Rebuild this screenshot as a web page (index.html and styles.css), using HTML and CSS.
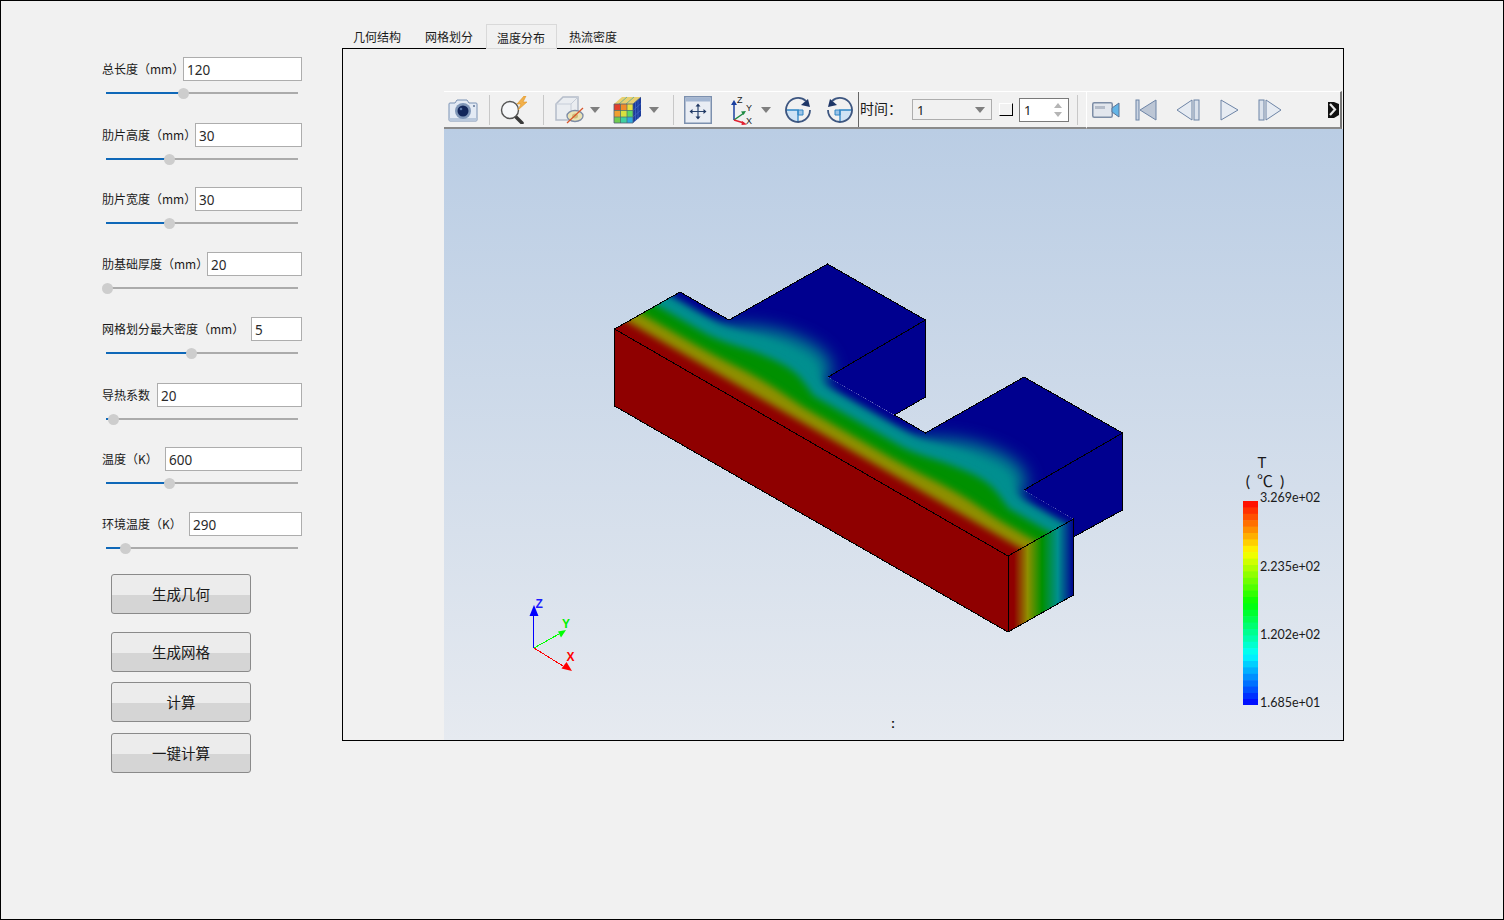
FILE: index.html
```html
<!DOCTYPE html>
<html lang="zh-CN">
<head>
<meta charset="utf-8">
<title>肋片温度分布</title>
<link rel="stylesheet" href="styles.css">
</head>
<body>
<div class="app">
  <aside class="side">
    <div class="fields">
      <div class="field"><div class="row"><span class="label">总长度（mm）</span><div class="input w119">120</div></div><div class="slider"><div class="fill" style="width:77px"><i class="thumb"></i></div></div></div>
      <div class="field"><div class="row"><span class="label">肋片高度（mm）</span><div class="input w107">30</div></div><div class="slider"><div class="fill" style="width:63px"><i class="thumb"></i></div></div></div>
      <div class="field"><div class="row"><span class="label">肋片宽度（mm）</span><div class="input w107">30</div></div><div class="slider"><div class="fill" style="width:63px"><i class="thumb"></i></div></div></div>
      <div class="field"><div class="row"><span class="label">肋基础厚度（mm）</span><div class="input w95">20</div></div><div class="slider"><div class="fill" style="width:1px"><i class="thumb"></i></div></div></div>
      <div class="field"><div class="row"><span class="label">网格划分最大密度（mm）</span><div class="input w51">5</div></div><div class="slider"><div class="fill" style="width:85px"><i class="thumb"></i></div></div></div>
      <div class="field"><div class="row"><span class="label">导热系数</span><div class="input w145">20</div></div><div class="slider"><div class="fill" style="width:7px"><i class="thumb"></i></div></div></div>
      <div class="field"><div class="row"><span class="label">温度（K）</span><div class="input w137">600</div></div><div class="slider"><div class="fill" style="width:63px"><i class="thumb"></i></div></div></div>
      <div class="field"><div class="row"><span class="label">环境温度（K）</span><div class="input w113">290</div></div><div class="slider"><div class="fill" style="width:19px"><i class="thumb"></i></div></div></div>
    </div>
    <div class="buttons">
      <button class="btn gap18">生成几何</button>
      <button class="btn gap10">生成网格</button>
      <button class="btn gap11">计算</button>
      <button class="btn">一键计算</button>
    </div>
  </aside>

  <main class="main">
    <nav class="tabs">
      <div class="tab">几何结构</div>
      <div class="tab">网格划分</div>
      <div class="tab active">温度分布</div>
      <div class="tab">热流密度</div>
    </nav>
    <section class="pane">
      <div class="viewer">
        <div class="toolbars">
          <div class="tb tb-main">
            <svg width="30" height="24" viewBox="0 0 30 24"><path d="M2 5h5l2-3h10l2 3h7a1 1 0 0 1 1 1v16a1 1 0 0 1-1 1H2a1 1 0 0 1-1-1V6a1 1 0 0 1 1-1z" fill="#e3eaf4" stroke="#7b92b4"/><path d="M1.500 20h27v3h-27z" fill="#b9c8dc"/><circle cx="15" cy="13" r="8" fill="#8097b8"/><circle cx="15" cy="13" r="5.500" fill="#12265a"/><circle cx="13" cy="11" r="1.300" fill="#5c78a8"/><circle cx="26" cy="8" r="1" fill="#5f7596"/></svg>
            <i class="sep"></i>
            <svg width="30" height="28" viewBox="0 0 30 28"><path d="M16 20l7 7" stroke="#3a3a3a" stroke-width="3.500" stroke-linecap="round"/><circle cx="11" cy="14" r="8.500" fill="#f6f7f9" stroke="#555" stroke-width="1.400"/><path d="M25 0l-7 8h4l-3 6 9-8h-4l3-6z" fill="#f2b04a" stroke="#de9526" stroke-width=".6"/></svg>
            <i class="sep"></i>
            <svg width="29" height="28" viewBox="0 0 29 28"><path d="M1 8l7-7h15v16l-7 7H1z" fill="#eaedf1" stroke="#b4bcc9" stroke-width="1.500"/><path d="M1 8h15v16M16 8l7-7" fill="none" stroke="#c6cdd8"/><ellipse cx="20" cy="20" rx="8" ry="5.500" fill="#ebe3b4" stroke="#7d8ca6" stroke-width="1.300"/><ellipse cx="20" cy="20" rx="3" ry="2.500" fill="#cfbe78"/><path d="M12 27L28 12" stroke="#d9552a" stroke-width="1.200"/></svg>
            <svg class="caret" width="10" height="6" viewBox="0 0 10 6"><path d="M0 0h10L5 6z" fill="#7f7f7f"/></svg>
            <svg width="29" height="28" viewBox="0 0 29 28"><path d="M1 8L9 1h19L20 8z" fill="#e8d070"/><path d="M6 8l8-7M13 8l8-7" stroke="#5a9" stroke-width=".8"/><path d="M1 8h19v19H1z" fill="#39c46a"/><path d="M1 8h6.500v6.500H1z" fill="#e2402a"/><path d="M7.500 8H14v6.500H7.500z" fill="#f08c2a"/><path d="M14 8h6v6.500h-6z" fill="#e8e040"/><path d="M1 14.500h6.500V21H1z" fill="#f0a030"/><path d="M7.500 14.500H14V21H7.500z" fill="#d8e040"/><path d="M14 14.500h6V21h-6z" fill="#60d860"/><path d="M1 21h6.500v6H1z" fill="#70cc50"/><path d="M7.500 21H14v6H7.500z" fill="#40d0a0"/><path d="M14 21h6v6h-6z" fill="#30a8e0"/><path d="M20 8l8-7v19l-8 7z" fill="#1c3c9c"/><path d="M22.500 6v19M25 4v19M20 14.500l8-7M20 21l8-7" stroke="#4468c8" stroke-width=".7"/><path d="M7.500 8v19M14 8v19M1 14.500h19M1 21h19" stroke="#4a6a70" stroke-width=".7"/><path d="M1 8h19v19H1zM20 8l8-7" fill="none" stroke="#506078" stroke-width=".8"/></svg>
            <svg class="caret" width="10" height="6" viewBox="0 0 10 6"><path d="M0 0h10L5 6z" fill="#7f7f7f"/></svg>
            <i class="sep"></i>
            <svg width="28" height="28" viewBox="0 0 28 28"><rect x=".75" y=".75" width="26.500" height="26.500" fill="#e9edf4" stroke="#7c90ae" stroke-width="1.500"/><rect x="1.500" y="1.500" width="25" height="4" fill="#a3b6d2"/><path d="M14 9v13M8 15.500h12" stroke="#2b4570" stroke-width="1.200"/><path d="M14 7.500l-2.500 3h5zM14 23.500l-2.500-3h5zM5.500 15.500l3-2.500v5zM22.500 15.500l-3-2.500v5z" fill="#1f3763"/></svg>
            <svg class="axes" width="24" height="30" viewBox="0 0 24 30"><path d="M3 25V8" stroke="#1a3fa0" stroke-width="1.500"/><path d="M3 5l-3 5h6z" fill="#1a3fa0"/><path d="M3 25l10-7" stroke="#1e8a40" stroke-width="1.500"/><path d="M15 16l-5 .5 2.500 3.500z" fill="#1e8a40"/><path d="M3 25l10 3" stroke="#e02030" stroke-width="1.500"/><path d="M16 29.500l-5-3.500-.5 4z" fill="#e02030"/><text x="6" y="8" class="ax-t">Z</text><text x="15" y="16" class="ax-t">Y</text><text x="15" y="29" class="ax-t">X</text></svg>
            <svg class="caret" width="10" height="6" viewBox="0 0 10 6"><path d="M0 0h10L5 6z" fill="#7f7f7f"/></svg>
            <svg width="28" height="28" viewBox="0 0 28 28"><path d="M14 14H2a12 12 0 0 0 12 12z" fill="#cfe3f5"/><path d="M14 14h5v5h-5z" fill="#9cc4e8" stroke="#2f86c6"/><path d="M2 14h12v12" fill="none" stroke="#2f86c6" stroke-width="1.300"/><path d="M22 5A12 12 0 1 0 26 14" fill="none" stroke="#3d5680" stroke-width="1.800"/><path d="M26 11l-9-2 7-6z" fill="#1d3566"/></svg>
            <svg width="28" height="28" viewBox="0 0 28 28"><path d="M14 14h12a12 12 0 0 1-12 12z" fill="#cfe3f5"/><path d="M9 14h5v5H9z" fill="#9cc4e8" stroke="#2f86c6"/><path d="M26 14H14v12" fill="none" stroke="#2f86c6" stroke-width="1.300"/><path d="M6 5A12 12 0 1 1 2 14" fill="none" stroke="#3d5680" stroke-width="1.800"/><path d="M2 11l9-2-7-6z" fill="#1d3566"/></svg>
            <i class="sep dark"></i>
            <span class="time-label">时间：</span>
            <div class="combo"><span>1</span><svg width="10" height="6" viewBox="0 0 10 6"><path d="M0 0h10L5 6z" fill="#7f7f7f"/></svg></div>
            <i class="check"></i>
            <div class="spin"><span>1</span><svg width="8" height="14" viewBox="0 0 8 14"><path d="M0 5l4-5 4 5zM0 9l4 5 4-5z" fill="#b5b5b5"/></svg></div>
            <i class="sep"></i>
          </div>
          <div class="tb tb-play">
            <svg width="28" height="16" viewBox="0 0 28 16"><rect x=".75" y=".75" width="19.500" height="14.500" rx="1.500" fill="#e2e6ed" stroke="#7d8da6" stroke-width="1.500"/><rect x="3" y="4" width="10" height="3" fill="#b4bcc9"/><path d="M20 6l7-5v14l-7-5z" fill="#63b4e6" stroke="#5d7596"/></svg>
            <svg width="22" height="22" viewBox="0 0 22 22"><rect x="1" y="1" width="3" height="20" fill="#cbd5e3" stroke="#6d84a6"/><path d="M21 1v20L5 11z" fill="#bcc6d5" stroke="#6d84a6"/></svg>
            <svg width="24" height="22" viewBox="0 0 24 22"><path d="M16 1v20L1 11z" fill="#e6ebf2" stroke="#6d84a6"/><rect x="18" y="1" width="5" height="20" fill="#dbe2ec" stroke="#6d84a6"/></svg>
            <svg width="19" height="22" viewBox="0 0 19 22"><path d="M1 1v20l17-10z" fill="#e6ebf2" stroke="#6d84a6"/></svg>
            <svg width="24" height="22" viewBox="0 0 24 22"><rect x="1" y="1" width="5" height="20" fill="#dbe2ec" stroke="#6d84a6"/><path d="M8 1v20l15-10z" fill="#e6ebf2" stroke="#6d84a6"/></svg>
            <i></i>
            <svg class="more" width="11" height="17" viewBox="0 0 11 17"><path d="M0 1h6l5 2v11l-5 3H0z" fill="#111"/><path d="M2 3l5 5.500-5 5.500" fill="none" stroke="#e8e8e8" stroke-width="2.200"/></svg>
          </div>
        </div>
        <div class="canvas">
          <svg class="scene" viewBox="444 129 899 611" width="899" height="611">
            <defs>
              <clipPath id="topface"><path d="M614.500 329L680 292L729 320L827.500 264L925.500 320L828 377L925.500 433L1024 377L1122.500 433L1024 490L1073.500 519L1008 556Z"/></clipPath>
              <filter id="soft" filterUnits="userSpaceOnUse" x="500" y="200" width="760" height="500"><feGaussianBlur stdDeviation="3.800"/></filter>
              <filter id="wide" filterUnits="userSpaceOnUse" x="500" y="200" width="760" height="500"><feGaussianBlur stdDeviation="9"/></filter>
              <linearGradient id="endface" gradientUnits="userSpaceOnUse" x1="1008" y1="0" x2="1073.500" y2="0">
                <stop offset=".09" stop-color="#8f0000"/><stop offset=".3" stop-color="#8f8f00"/><stop offset=".52" stop-color="#009000"/><stop offset=".76" stop-color="#008f8f"/><stop offset="1" stop-color="#00008f"/>
              </linearGradient>
              <linearGradient id="sky" x1="0" y1="0" x2="0" y2="1"><stop offset="0" stop-color="#bacde4"/><stop offset="1" stop-color="#e6eaf0"/></linearGradient>
            </defs>
            <rect x="444" y="129" width="899" height="611" fill="url(#sky)"/>

            <path class="crisp" fill="#00008f" d="M925.500 320L828 377L894.500 415L925.500 397ZM1122.500 433L1024 490L1073.500 519V537L1122.500 510Z"/>
            <g clip-path="url(#topface)">
              <path class="crisp" fill="#00008f" d="M600 250H1140V570H600Z"/>
              <g filter="url(#wide)"><path transform="matrix(3.935 2.27 .655 -.37 614.500 329)" fill="#008f8f" d="M10 60C14 96 18 124 25 130C31 136 35 124 37 108C38 96 39 84 40 60ZM59.500 60C63.500 96 67.500 124 74.500 130C80.500 136 84.500 124 86.500 108C87.500 96 88.500 84 89.500 60Z"/></g>
              <g filter="url(#soft)"><path transform="matrix(3.935 2.27 .655 -.37 614.500 329)" fill="#008f8f" d="M-10 -30V88H12C16 90 20 104 26 106C32 108 35 100 37 92C38 90 39 88 40 88H61.500C65.500 90 69.500 104 75.500 106C81.500 108 84.500 100 86.500 92C87.500 90 88.500 88 89.500 88H110V-30Z"/></g>
              <g filter="url(#soft)"><path transform="matrix(3.935 2.27 .655 -.37 614.500 329)" fill="#009000" d="M-10 -30V64H13C18 66 22 80 28 82C33 84 35 76 40 64H62.500C67.500 66 71.500 80 77.500 82C82.500 84 84.500 76 89.500 64H110V-30Z"/></g>
              <g filter="url(#soft)"><path transform="matrix(3.935 2.27 .655 -.37 614.500 329)" fill="#8f8f00" d="M-10 -30V41H14C20 41 24 45 30 45C34 45 36 43 42 41H63.500C69.500 41 73.500 45 79.500 45C83.500 45 85.500 43 91.500 41H110V-30Z"/></g>
              <g filter="url(#soft)"><path transform="matrix(3.935 2.27 .655 -.37 614.500 329)" fill="#8f0000" d="M-10 -30V20H110V-30Z"/></g>
            </g>
            <path class="crisp" fill="#8f0000" d="M614.500 329L1008 556V632L614.500 406Z"/>
            <path class="crisp" fill="url(#endface)" d="M1008 556L1073.500 519V595L1008 632Z"/>
            <path class="edge" d="M614.500 329L680 292L729 320L827.500 264L925.500 320V397L894.500 415L925.500 433L1024 377L1122.500 433V510L1073.500 537V595L1008 632L614.500 406ZM614.500 329L1008 556L1073.500 519V537M1008 556V632M828 377L925.500 320M1024 490L1122.500 433"/>

            <g class="triad">
              <path d="M533.500 648V612" stroke="#0000ff"/><path d="M534 605l-4.500 11h9z" fill="#0000ff"/>
              <path d="M534 648L559 634" stroke="#00ff00"/><path d="M566 630l-8 1.500 3 6z" fill="#00ff00"/>
              <path d="M534 648L563 666" stroke="#ff0000"/><path d="M572 671l-10.500-2.500 5-6.500z" fill="#ff0000"/>
              <text x="535.500" y="608" class="t-z">Z</text><text x="562" y="628" class="t-y">Y</text><text x="566.500" y="661" class="t-x">X</text>
            </g>

            <g>
              <rect x="1243" y="501" width="15" height="7" fill="#ff1000"/><rect x="1243" y="507.400" width="15" height="7" fill="#ff3000"/><rect x="1243" y="513.800" width="15" height="7" fill="#ff5000"/><rect x="1243" y="520.200" width="15" height="7" fill="#ff7000"/><rect x="1243" y="526.600" width="15" height="7" fill="#ff8f00"/><rect x="1243" y="533" width="15" height="7" fill="#ffaf00"/><rect x="1243" y="539.400" width="15" height="7" fill="#ffcf00"/><rect x="1243" y="545.800" width="15" height="7" fill="#ffef00"/>
              <rect x="1243" y="552.200" width="15" height="7" fill="#efff00"/><rect x="1243" y="558.600" width="15" height="7" fill="#cfff00"/><rect x="1243" y="565" width="15" height="7" fill="#afff00"/><rect x="1243" y="571.400" width="15" height="7" fill="#8fff00"/><rect x="1243" y="577.800" width="15" height="7" fill="#70ff00"/><rect x="1243" y="584.200" width="15" height="7" fill="#50ff00"/><rect x="1243" y="590.600" width="15" height="7" fill="#30ff00"/><rect x="1243" y="597" width="15" height="7" fill="#10ff00"/>
              <rect x="1243" y="603.400" width="15" height="7" fill="#00ff10"/><rect x="1243" y="609.800" width="15" height="7" fill="#00ff30"/><rect x="1243" y="616.200" width="15" height="7" fill="#00ff50"/><rect x="1243" y="622.600" width="15" height="7" fill="#00ff70"/><rect x="1243" y="629" width="15" height="7" fill="#00ff8f"/><rect x="1243" y="635.400" width="15" height="7" fill="#00ffaf"/><rect x="1243" y="641.800" width="15" height="7" fill="#00ffcf"/><rect x="1243" y="648.200" width="15" height="7" fill="#00ffef"/>
              <rect x="1243" y="654.600" width="15" height="7" fill="#00efff"/><rect x="1243" y="661" width="15" height="7" fill="#00cfff"/><rect x="1243" y="667.400" width="15" height="7" fill="#00afff"/><rect x="1243" y="673.800" width="15" height="7" fill="#008fff"/><rect x="1243" y="680.200" width="15" height="7" fill="#0070ff"/><rect x="1243" y="686.600" width="15" height="7" fill="#0050ff"/><rect x="1243" y="693" width="15" height="6" fill="#0030ff"/><rect x="1243" y="699" width="15" height="6" fill="#0010ff"/>
              <text x="1262" y="468" class="cb-title" text-anchor="middle">T</text>
              <text x="1265" y="487" class="cb-unit" text-anchor="middle">( ℃ )</text>
              <text x="1260" y="502" class="cb-label">3.269e+02</text>
              <text x="1260" y="571" class="cb-label">2.235e+02</text>
              <text x="1260" y="639" class="cb-label">1.202e+02</text>
              <text x="1260" y="707" class="cb-label">1.685e+01</text>
            </g>
            <text x="893" y="728" class="colon" text-anchor="middle">:</text>
          </svg>
        </div>
      </div>
    </section>
  </main>
</div>
</body>
</html>
```
FILE: styles.css
```css
* { box-sizing: border-box; }
html, body { margin: 0; padding: 0; }
body {
  width: 1504px;
  height: 920px;
  overflow: hidden;
  font-family: "Noto Sans CJK SC", "Noto Sans", sans-serif;
  color: #1a1a1a;
}
.app {
  display: flex;
  width: 1504px;
  height: 920px;
  border: 1px solid #000;
  background: #f1f1f1;
}

/* left panel */
.side {
  width: 341px;
  flex: none;
  padding: 56px 0 0 101px;
}
.fields {
  display: grid;
  grid-template-columns: 200px;
  grid-template-rows: 66px 64px 65px 65px 66px 64px 65px 62px;
}
.row {
  display: flex;
  align-items: center;
  height: 24px;
}
.label {
  flex: 1;
  min-width: 0;
  font-size: 12px;
  line-height: 26px;
  white-space: nowrap;
}
.input {
  flex: none;
  height: 24px;
  padding-left: 3px;
  border: 1px solid #adadad;
  background: #fff;
  font: 13.500px/24px "Noto Sans", sans-serif;
  color: #2a2a2a;
}
.w119 { width: 119px; }
.w107 { width: 107px; }
.w95 { width: 95px; }
.w51 { width: 51px; }
.w145 { width: 145px; }
.w137 { width: 137px; }
.w113 { width: 113px; }
.slider {
  width: 192px;
  height: 2px;
  margin: 11px 0 0 4px;
  background: #ababab;
}
.fill {
  position: relative;
  height: 2px;
  background: #0f68b8;
}
.thumb {
  position: absolute;
  right: -6px;
  top: -4px;
  width: 11px;
  height: 11px;
  border-radius: 50%;
  background: #cdcdcd;
}
.buttons {
  display: flex;
  flex-direction: column;
  margin-left: 9px;
}
.btn {
  width: 140px;
  height: 40px;
  padding: 0;
  border: 1px solid #8a8a8a;
  border-radius: 3px;
  background: linear-gradient(#ececec 0 20px, #d5d5d5 20px);
  color: #1a1a1a;
  font: 14.500px/36px "Noto Sans CJK SC", sans-serif;
}
.gap18 { margin-bottom: 18px; }
.gap10 { margin-bottom: 10px; }
.gap11 { margin-bottom: 11px; }

/* tabs */
.main {
  width: 1002px;
  flex: none;
  margin-top: 23px;
}
.tabs {
  display: flex;
  height: 24px;
}
.tab {
  width: 72px;
  height: 24px;
  padding-right: 2px;
  text-align: center;
  font-size: 12px;
  line-height: 26px;
}
.tab.active {
  position: relative;
  z-index: 1;
  width: 71px;
  height: 25px;
  margin-right: 1px;
  padding-right: 1px;
  border: 1px solid #d9d9d9;
  background: #f1f1f1;
}

/* pane and viewer */
.pane {
  height: 693px;
  padding: 42px 0 0 101px;
  border: 1px solid #000;
}
.viewer {
  display: flex;
  flex-direction: column;
  height: 650px;
}
.toolbars {
  display: flex;
  flex: none;
  height: 38px;
}
.tb {
  display: grid;
  grid-template-rows: 35px;
  place-items: center;
  height: 38px;
  border-top: 1px solid #fff;
  border-bottom: 2px solid #8a8a8a;
  background: #f1f1f1;
}
.tb-main {
  width: 642px;
  grid-template-columns: 38px 14px 36px 22px 30px 22px 42px 12px 26px 24px 50px 12px 52px 32px 4px 52px 80px 21px 56px 17px;
}
.tb-play {
  width: 256px;
  border-left: 1px solid #fff;
  border-right: 2px solid #777;
  grid-template-columns: 37px 44px 40px 42px 40px 34px 17px;
}
.sep {
  width: 1px;
  height: 30px;
  background: #c8c8c8;
}
.sep.dark {
  height: 35px;
  background: #666;
}
.axes { justify-self: end; margin-right: 5px; }
.ax-t {
  font: 9px "Liberation Sans", sans-serif;
  fill: #222;
}
.time-label {
  justify-self: start;
  margin-top: -3px;
  font-size: 14px;
  line-height: 20px;
  white-space: nowrap;
}
.combo {
  display: flex;
  align-items: center;
  justify-content: space-between;
  width: 80px;
  height: 21px;
  padding: 0 6px 0 4px;
  border: 1px solid #adadad;
  font: 13px "Noto Sans", sans-serif;
}
.check {
  justify-self: end;
  width: 14px;
  height: 13px;
  border-top: 1px solid #fff;
  border-left: 1px solid #fff;
  border-right: 1px solid #000;
  border-bottom: 1px solid #000;
}
.spin {
  display: flex;
  align-items: center;
  justify-content: space-between;
  justify-self: end;
  width: 50px;
  height: 24px;
  padding: 0 6px 0 4px;
  border: 1px solid #7a7a7a;
  background: #fff;
  font: 13px "Noto Sans", sans-serif;
}
.more { justify-self: end; margin-right: 2px; }
.canvas {
  flex: 1;
  min-height: 0;
}
.scene { display: block; }
.crisp { shape-rendering: crispEdges; }
.edge {
  fill: none;
  stroke: #000;
  stroke-width: 1;
  shape-rendering: crispEdges;
}
.triad path[stroke] {
  fill: none;
  stroke-width: 1;
  shape-rendering: crispEdges;
}
.triad text { font: bold 12px "Liberation Sans", sans-serif; }
.t-z { fill: #1c1cff; }
.t-y { fill: #00f000; }
.t-x { fill: #ff0000; }
.cb-title {
  font: 15px "Lato", sans-serif;
  fill: #1a1a1a;
}
.cb-unit {
  font: 16px "Lato", sans-serif;
  word-spacing: 3px;
  fill: #1a1a1a;
}
.cb-label {
  font: 12.500px "Lato", sans-serif;
  fill: #1a1a1a;
}
.colon {
  font: bold 12px "Liberation Sans", sans-serif;
  fill: #111;
}
```
